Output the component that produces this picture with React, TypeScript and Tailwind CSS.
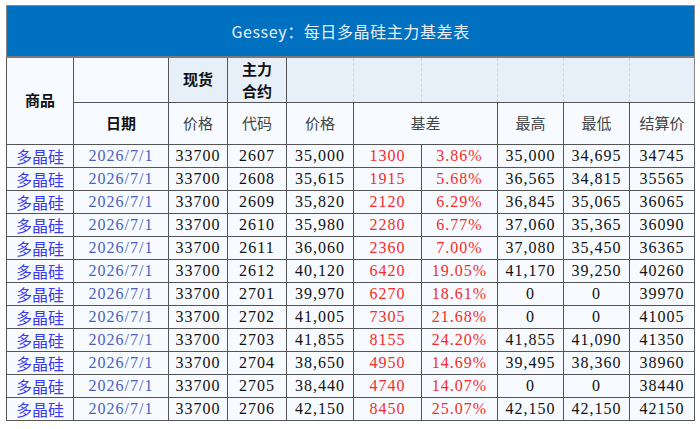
import React from "react";

const rows: string[][] = [
  ["2607", "35,000", "1300", "3.86%", "35,000", "34,695", "34745"],
  ["2608", "35,615", "1915", "5.68%", "36,565", "34,815", "35565"],
  ["2609", "35,820", "2120", "6.29%", "36,845", "35,065", "36065"],
  ["2610", "35,980", "2280", "6.77%", "37,060", "35,365", "36090"],
  ["2611", "36,060", "2360", "7.00%", "37,080", "35,450", "36365"],
  ["2612", "40,120", "6420", "19.05%", "41,170", "39,250", "40260"],
  ["2701", "39,970", "6270", "18.61%", "0", "0", "39970"],
  ["2702", "41,005", "7305", "21.68%", "0", "0", "41005"],
  ["2703", "41,855", "8155", "24.20%", "41,855", "41,090", "41350"],
  ["2704", "38,650", "4950", "14.69%", "39,495", "38,360", "38960"],
  ["2705", "38,440", "4740", "14.07%", "0", "0", "38440"],
  ["2706", "42,150", "8450", "25.07%", "42,150", "42,150", "42150"],
];

const widths = [67, 95, 59, 59, 67, 68, 76, 66, 66, 65];
const cjk = { fontFamily: '"Noto Sans CJK SC", "Noto Sans", sans-serif' };
const num = {
  fontFamily: '"Liberation Serif", "DejaVu Serif", "Times New Roman", serif',
  letterSpacing: "1px",
};

const cell = "bg-[#f7fbff] border border-[#555] text-center p-0";

export default function App() {
  return (
    <div className="w-[700px] h-[429px] bg-white pt-[5px] pl-[6px]">
      <table className="table-fixed border-collapse w-[689px] border border-[#8a8a8a]">
        <colgroup>
          {widths.map((w, i) => (
            <col key={i} style={{ width: w }} />
          ))}
        </colgroup>
        <tbody>
          <tr className="h-[51px]">
            <td
              colSpan={10}
              className="bg-[#0070c0] text-center text-[16px] tracking-[0.6px] text-[#e6eff9] border-b-2 border-[#7a7a7a]"
              style={cjk}
            >
              Gessey：每日多晶硅主力基差表
            </td>
          </tr>
          <tr className="h-[45px]">
            <td
              rowSpan={2}
              className="bg-[#f7fbff] border border-[#555] text-center text-[15px] font-bold text-[#111]"
              style={cjk}
            >
              商品
            </td>
            <td className="bg-[#f7fbff] border border-[#555]"></td>
            <td className="bg-[#e7eff9] border border-[#555] text-center text-[15px] font-bold text-[#111]" style={cjk}>
              现货
            </td>
            <td className="bg-[#e7eff9] border border-[#555] text-center text-[15px] font-bold text-[#111] leading-[22px]" style={cjk}>
              主力
              <br />
              合约
            </td>
            <td className="bg-[#e7eff9] border-b border-[#555] border-r border-r-[#cfd5dc] border-dashed"></td>
            <td className="bg-[#e7eff9] border-b border-[#555] border-r border-r-[#cfd5dc] border-dashed"></td>
            <td className="bg-[#e7eff9] border-b border-[#555] border-r border-r-[#cfd5dc] border-dashed"></td>
            <td className="bg-[#e7eff9] border-b border-[#555] border-r border-r-[#cfd5dc] border-dashed"></td>
            <td className="bg-[#e7eff9] border-b border-[#555] border-r border-r-[#cfd5dc] border-dashed"></td>
            <td className="bg-[#e7eff9] border-b border-[#555]"></td>
          </tr>
          <tr className="h-[42px] text-[15px] text-[#444]" style={cjk}>
            <td className="bg-[#f7fbff] border border-[#555] text-center font-bold text-[#111]">日期</td>
            <td className="bg-[#f7fbff] border border-[#555] text-center">价格</td>
            <td className="bg-[#f7fbff] border border-[#555] text-center">代码</td>
            <td className="bg-[#f7fbff] border border-[#555] text-center">价格</td>
            <td colSpan={2} className="bg-[#f7fbff] border border-[#555] text-center">基差</td>
            <td className="bg-[#f7fbff] border border-[#555] text-center">最高</td>
            <td className="bg-[#f7fbff] border border-[#555] text-center">最低</td>
            <td className="bg-[#f7fbff] border border-[#555] text-center">结算价</td>
          </tr>
          {rows.map((r, i) => (
            <tr key={i} className="h-[23px] text-[16px] leading-[20px]">
              <td className={`${cell} text-[#3a3af0]`} style={cjk}>
                多晶硅
              </td>
              <td className={`${cell} text-[#4a5fc0]`} style={num}>
                2026/7/1
              </td>
              <td className={`${cell} text-[#111]`} style={num}>
                33700
              </td>
              <td className={`${cell} text-[#111]`} style={num}>
                {r[0]}
              </td>
              <td className={`${cell} text-[#111]`} style={num}>
                {r[1]}
              </td>
              <td className={`${cell} text-[#f52a2a]`} style={num}>
                {r[2]}
              </td>
              <td className={`${cell} text-[#f52a2a]`} style={num}>
                {r[3]}
              </td>
              <td className={`${cell} text-[#111]`} style={num}>
                {r[4]}
              </td>
              <td className={`${cell} text-[#111]`} style={num}>
                {r[5]}
              </td>
              <td className={`${cell} text-[#111]`} style={num}>
                {r[6]}
              </td>
            </tr>
          ))}
        </tbody>
      </table>
    </div>
  );
}
